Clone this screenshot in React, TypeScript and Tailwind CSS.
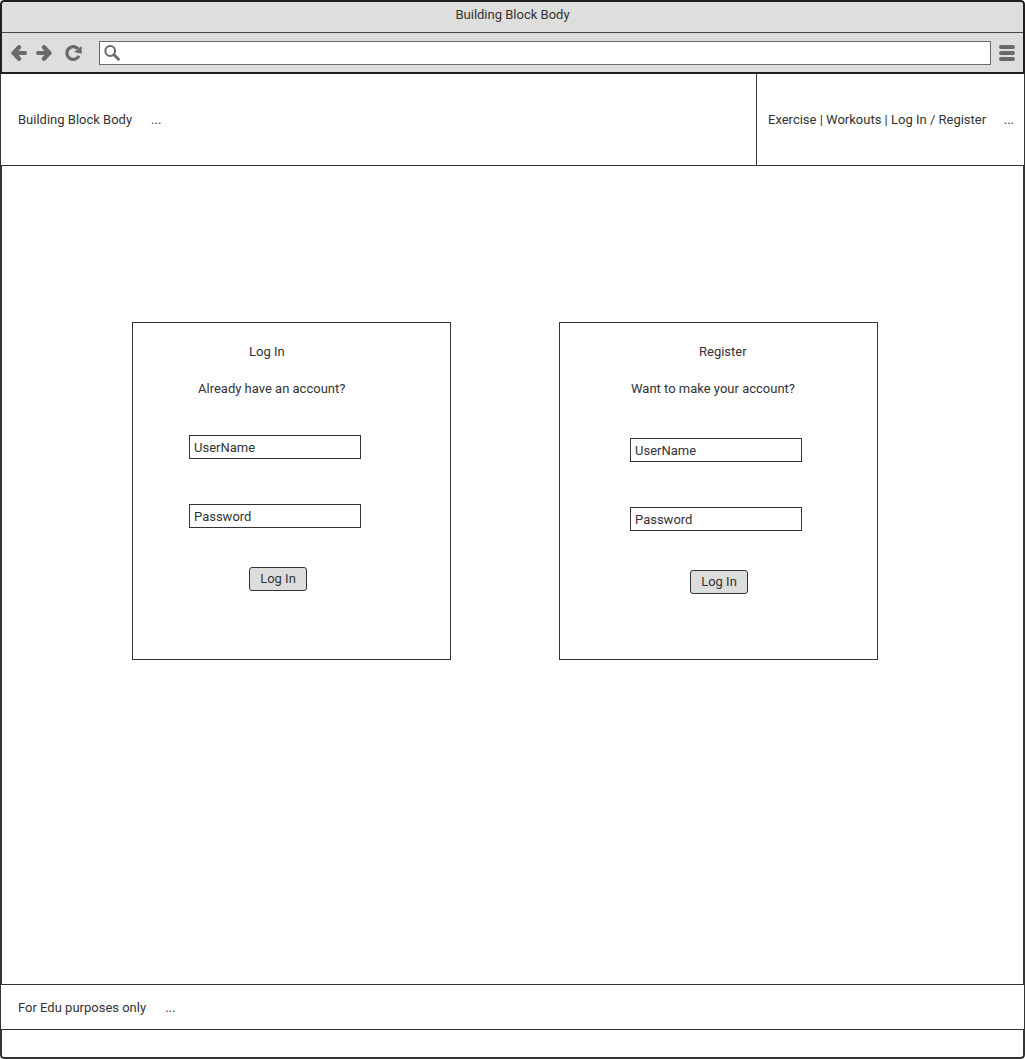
import React from "react";

const ink = "#6a6a69";

function BackIcon() {
  return (
    <svg width="16" height="16" viewBox="0 0 16 16" fill="none" stroke={ink} strokeLinecap="round" aria-hidden="true">
      <path d="M3 8H14" strokeWidth="4" />
      <path d="M8 2.3L2.7 8L8 13.7" strokeWidth="4.4" strokeLinejoin="miter" />
    </svg>
  );
}

function ForwardIcon() {
  return (
    <svg width="16" height="16" viewBox="0 0 16 16" fill="none" stroke={ink} strokeLinecap="round" aria-hidden="true">
      <path d="M2 8H13" strokeWidth="4" />
      <path d="M8 2.3L13.3 8L8 13.7" strokeWidth="4.4" strokeLinejoin="miter" />
    </svg>
  );
}

function ReloadIcon() {
  return (
    <svg width="18" height="16" viewBox="0 0 18 16" fill="none" aria-hidden="true">
      <path d="M13 3.7A6.4 6.4 0 1 0 14 10.9" stroke={ink} strokeWidth="3.2" />
      <path d="M16.7 1V8.8L9 6.9Z" fill={ink} />
    </svg>
  );
}

function SearchIcon() {
  return (
    <svg width="16" height="16" viewBox="0 0 16 16" fill="none" stroke={ink} aria-hidden="true">
      <circle cx="6.2" cy="6" r="4.9" strokeWidth="2" />
      <path d="M10 9.8L14.4 14.2" strokeWidth="2.9" strokeLinecap="round" />
    </svg>
  );
}

function MenuIcon() {
  return (
    <svg width="16" height="16" viewBox="0 0 16 16" fill={ink} aria-hidden="true">
      <rect y="0" width="16" height="4" rx="2" />
      <rect y="6" width="16" height="4" rx="2" />
      <rect y="12" width="16" height="4" rx="2" />
    </svg>
  );
}

type AccountCardProps = {
  title: string;
  prompt: string;
  inset: string;
  titleInset: string;
  promptInset: string;
  fieldsTop: string;
};

function AccountCard({ title, prompt, inset, titleInset, promptInset, fieldsTop }: AccountCardProps) {
  return (
    <form
      onSubmit={(e) => e.preventDefault()}
      className={`flex min-h-[338px] w-[319px] flex-col items-start border border-[#333333] pt-[19px] pb-8 ${inset}`}
    >
      <h2 className={titleInset}>{title}</h2>
      <p className={`mt-[17px] ${promptInset}`}>{prompt}</p>
      <div className={`flex flex-col gap-[45px] ${fieldsTop}`}>
        <input
          type="text"
          aria-label={`${title} user name`}
          placeholder="UserName"
          className="h-6 w-[172px] border border-[#333333] px-1 placeholder:text-[#333333]"
        />
        <input
          type="password"
          aria-label={`${title} password`}
          placeholder="Password"
          className="h-6 w-[172px] border border-[#333333] px-1 placeholder:text-[#333333]"
        />
      </div>
      <button type="submit" className="mt-[39px] ml-[60px] flex h-6 w-[58px] items-center justify-center rounded-[3px] border border-[#333333] bg-[#dddddd]">
        Log In
      </button>
    </form>
  );
}

export default function App() {
  return (
    <div className="flex min-h-screen flex-col overflow-hidden rounded bg-white font-['Roboto',sans-serif] text-[13px] leading-5 text-[#333333]">
      <div className="rounded-t border-2 border-[#231f20] bg-[#dededc]">
        <div className="flex h-[31px] justify-center border-b border-[#444444] pt-[3px]">Building Block Body</div>
        <div className="flex h-[39px] items-center pr-2 pl-[9px]">
          <button type="button" aria-label="Back">
            <BackIcon />
          </button>
          <button type="button" aria-label="Forward" className="ml-[9px]">
            <ForwardIcon />
          </button>
          <button type="button" aria-label="Reload" className="ml-[13px]">
            <ReloadIcon />
          </button>
          <div className="ml-4 flex h-6 flex-1 items-center gap-1 border border-[#6a6a69] bg-white px-1">
            <SearchIcon />
            <input type="text" aria-label="Address" className="min-w-0 flex-1 outline-none" />
          </div>
          <button type="button" aria-label="Menu" className="ml-2">
            <MenuIcon />
          </button>
        </div>
      </div>

      <header className="flex h-[92px] border-x border-b border-[#333333]">
        <div className="flex flex-1 items-center gap-[19px] pl-[17px]">
          <span>Building Block Body</span>
          <span>...</span>
        </div>
        <div className="flex w-[268px] items-center justify-between border-l border-[#333333] pr-[10px] pl-[11px]">
          <nav className="whitespace-pre">
            <a href="#exercise">Exercise</a> | <a href="#workouts">Workouts</a> | <a href="#account">Log In / Register</a>
          </nav>
          <span>...</span>
        </div>
      </header>

      <main className="flex flex-1 items-start justify-center gap-[108px] border-x-2 border-[#333333] pt-[156px] pr-[15px]">
        <AccountCard
          title="Log In"
          prompt="Already have an account?"
          inset="pl-14"
          titleInset="ml-[60px]"
          promptInset="ml-[9px]"
          fieldsTop="mt-9"
        />
        <AccountCard
          title="Register"
          prompt="Want to make your account?"
          inset="pl-[70px]"
          titleInset="ml-[69px]"
          promptInset="ml-px"
          fieldsTop="mt-[39px]"
        />
      </main>

      <footer className="flex h-[46px] items-center gap-[19px] border border-[#333333] pt-px pl-[17px]">
        <span>For Edu purposes only</span>
        <span>...</span>
      </footer>
      <div className="h-[29px] rounded-b border-x-2 border-b-2 border-[#333333]" />
    </div>
  );
}
